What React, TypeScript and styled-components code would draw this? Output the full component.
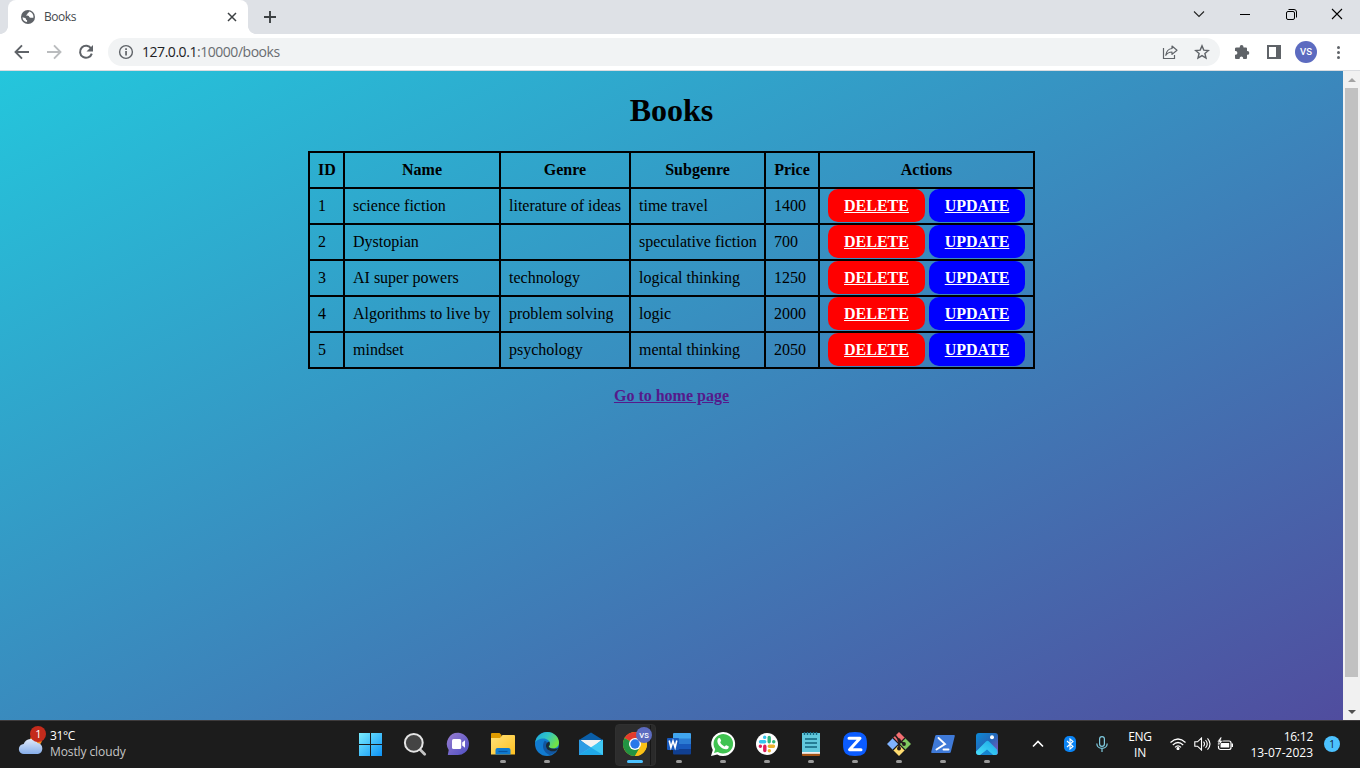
import React from "react";
import styled, { createGlobalStyle, css } from "styled-components";

const GlobalStyle = createGlobalStyle`
  html, body { margin: 0; padding: 0; overflow: hidden; }
  * { box-sizing: border-box; }
  svg { display: block; flex: none; }
`;

const ui = `"Open Sans", "Noto Sans", sans-serif`;

const Screen = styled.div`
  width: 1360px;
  height: 768px;
  display: flex;
  flex-direction: column;
  overflow: hidden;
  font-family: ${ui};
`;

/* Browser chrome */
const TabStrip = styled.div`
  height: 34px;
  background: #dee1e6;
  display: flex;
  justify-content: space-between;
  padding-left: 8px;
`;
const TabGroup = styled.div`
  display: flex;
`;
const Tab = styled.div`
  position: relative;
  width: 240px;
  height: 34px;
  background: #fff;
  border-radius: 8px 8px 0 0;
  display: flex;
  align-items: center;
  padding: 0 9px 0 13px;
  &::before, &::after {
    content: "";
    position: absolute;
    bottom: 0;
    width: 8px;
    height: 8px;
  }
  &::before {
    left: -8px;
    background: radial-gradient(circle at 0 0, transparent 7.6px, #fff 8.2px);
  }
  &::after {
    right: -8px;
    background: radial-gradient(circle at 100% 0, transparent 7.6px, #fff 8.2px);
  }
`;
const TabTitle = styled.span`
  flex: 1;
  margin: -1px 0 0 9px;
  font-size: 12px;
  letter-spacing: -0.45px;
  color: #45494d;
`;
const NewTab = styled.div`
  width: 44px;
  display: flex;
  align-items: center;
  justify-content: center;
`;
const WindowControls = styled.div`
  display: flex;
  height: 28px;
`;
const WindowButton = styled.div`
  width: 46px;
  display: flex;
  align-items: center;
  justify-content: center;
`;
const Toolbar = styled.div`
  height: 37px;
  background: #fff;
  border-bottom: 1px solid #dadce0;
  display: flex;
  align-items: center;
  padding-left: 6px;
`;
const ToolButton = styled.div`
  width: 32px;
  display: flex;
  justify-content: center;
`;
const AddressBar = styled.div`
  width: 1112px;
  height: 28px;
  margin: 0 6px 0 6px;
  border-radius: 14px;
  background: #f1f3f4;
  display: flex;
  align-items: center;
  padding: 0 2px 0 10px;
`;
const Url = styled.span`
  flex: 1;
  margin: -2px 0 0 8px;
  font-size: 14px;
  letter-spacing: -0.46px;
  color: #696d71;
  b { font-weight: 400; color: #202124; }
`;
const Avatar = styled.div`
  width: 22px;
  height: 22px;
  border-radius: 50%;
  background: #5c6bc0;
  color: #fff;
  font: 500 9.5px/22px Roboto, sans-serif;
  text-align: center;
`;

/* Web page */
const Viewport = styled.div`
  height: 649px;
  display: flex;
`;
const Page = styled.main`
  width: 1343px;
  height: 649px;
  overflow: hidden;
  background: linear-gradient(to bottom right, #24c6dc, #514a9d) 0 0 / 1343px 678px no-repeat;
  font: 16px/18px "Liberation Serif", "Times New Roman", serif;
  color: #000;
  display: flex;
  flex-direction: column;
  align-items: center;
`;
const Heading = styled.h1`
  margin: 21px 0 22px;
  font-size: 32px;
  line-height: 37px;
`;
const Table = styled.table`
  width: 727px;
  table-layout: fixed;
  border-collapse: collapse;
`;
const Col = styled.col<{ $w: number }>`
  width: ${(p) => p.$w}px;
`;
const cell = css`
  height: 36px;
  border: 2px solid #000;
  padding: 0 8px;
  white-space: nowrap;
`;
const Th = styled.th`
  ${cell}
  text-align: center;
`;
const Td = styled.td`
  ${cell}
`;
const Actions = styled.div`
  display: flex;
  gap: 4px;
  width: 197px;
  margin-bottom: 1px;
`;
const Action = styled.a<{ $tone: string; $w: number }>`
  width: ${(p) => p.$w}px;
  height: 33px;
  border-radius: 10px;
  background: ${(p) => p.$tone};
  color: #fff;
  font-weight: 700;
  line-height: 34px;
  text-align: center;
  text-decoration: underline;
`;
const HomeLink = styled.a`
  margin-top: 18px;
  font-weight: 700;
  color: #551a8b;
  text-decoration: underline;
`;
const Scrollbar = styled.div`
  width: 17px;
  background: #f1f1f1;
  display: flex;
  flex-direction: column;
  align-items: center;
`;
const ScrollArrow = styled.div`
  height: 17px;
  display: flex;
  align-items: center;
`;
const Thumb = styled.div`
  width: 13px;
  height: 589px;
  margin-bottom: 26px;
  background: #c1c1c1;
`;

/* Taskbar */
const Taskbar = styled.div`
  height: 48px;
  background: #1c1c1c;
  border-top: 1px solid #3e3b3c;
  display: flex;
  color: #fff;
  font-size: 12px;
`;
const Weather = styled.div`
  width: 349px;
  display: flex;
  padding: 5px 0 0 18px;
`;
const WeatherText = styled.div`
  margin: 2px 0 0 4px;
  line-height: 16px;
  letter-spacing: -0.1px;
  span { display: block; }
  span:first-child { letter-spacing: -0.4px; }
  span + span { color: #c6c6c6; }
`;
const AppSlot = styled.div<{ $active?: boolean }>`
  width: 44px;
  height: 47px;
  padding-top: 11px;
  display: flex;
  flex-direction: column;
  align-items: center;
  position: relative;
  ${(p) =>
    p.$active &&
    css`
      &::before {
        content: "";
        position: absolute;
        left: 2px;
        top: 3px;
        width: 39px;
        height: 40px;
        border-radius: 4px;
        background: linear-gradient(90deg, #2d2d2d 34px, #171717 34px, #171717 35px, #2a2a2a 35px);
        border: 1px solid #303030;
      }
    `}
  svg { position: relative; }
`;
const Indicator = styled.i<{ $active?: boolean }>`
  position: relative;
  width: ${(p) => (p.$active ? 16 : 6)}px;
  height: 3px;
  margin-top: 4px;
  border-radius: 2px;
  background: ${(p) => (p.$active ? "#4cc2ff" : "#9a9a9a")};
`;
const Tray = styled.div`
  display: flex;
  align-items: center;
  padding-left: 13px;
`;
const TrayItem = styled.div<{ $w: number }>`
  width: ${(p) => p.$w}px;
  display: flex;
  justify-content: center;
  margin-top: -1px;
`;
const Language = styled.div`
  width: 44px;
  margin-right: 4px;
  line-height: 16px;
  letter-spacing: -0.3px;
  text-align: center;
`;
const Clock = styled.div`
  width: 77px;
  line-height: 16px;
  text-align: right;
  white-space: nowrap;
  span { letter-spacing: -0.25px; }
`;
const Notice = styled.div`
  width: 16px;
  height: 16px;
  margin: -2px 0 0 11px;
  border-radius: 50%;
  background: #4cc2ff;
  color: #123;
  font-size: 10px;
  line-height: 16px;
  text-align: center;
`;

const Line = ({ d, w = 2, c = "#5f6368", s = 16 }: { d: string; w?: number; c?: string; s?: number }) => (
  <svg width={s} height={s} viewBox={`0 0 ${s} ${s}`} fill="none" stroke={c} strokeWidth={w}>
    <path d={d} />
  </svg>
);

const books = [
  ["1", "science fiction", "literature of ideas", "time travel", "1400"],
  ["2", "Dystopian", "", "speculative fiction", "700"],
  ["3", "AI super powers", "technology", "logical thinking", "1250"],
  ["4", "Algorithms to live by", "problem solving", "logic", "2000"],
  ["5", "mindset", "psychology", "mental thinking", "2050"],
];

const Icon = ({ children }: { children: React.ReactNode }) => (
  <svg width="24" height="24" viewBox="0 0 24 24" overflow="visible">{children}</svg>
);

const WindowsIcon = () => (
  <Icon>
    <defs>
      <linearGradient id="win" x1="0" y1="0" x2="24" y2="24" gradientUnits="userSpaceOnUse">
        <stop stopColor="#7df0ff" /><stop offset="1" stopColor="#0a8ff5" />
      </linearGradient>
    </defs>
    <path fill="url(#win)" d="M0 1h11v11H0zM12 1h11v11h-11zM0 13h11v11H0zM12 13h11v11h-11z" />
  </Icon>
);
const SearchIcon = () => (
  <Icon>
    <path d="M17 17.500l4.700 4.700" stroke="#c4c4c4" strokeWidth="2.800" strokeLinecap="round" />
    <circle cx="10.800" cy="10.800" r="8.900" fill="#444" stroke="#e4e4e4" strokeWidth="2" />
  </Icon>
);
const ChatIcon = () => (
  <Icon>
    <defs>
      <linearGradient id="chat" x1="0" y1="0" x2="1" y2="1">
        <stop stopColor="#9a7ed0" /><stop offset="1" stopColor="#4e4fc4" />
      </linearGradient>
    </defs>
    <path fill="url(#chat)" d="M11.800.8a11.100 11.100 0 1 1-2 22.200H.8l.9-5A11.100 11.100 0 0 1 11.800.8z" />
    <rect x="5" y="7" width="9.200" height="10" rx="1.600" fill="#fff" />
    <path d="M15.200 10.500l2.800-2.200v7.400l-2.800-2.200z" fill="#fff" />
  </Icon>
);
const FolderIcon = () => (
  <Icon>
    <defs>
      <linearGradient id="fold" x1="0" y1="0" x2="1" y2="1">
        <stop stopColor="#ffe27a" /><stop offset="1" stopColor="#ffc020" />
      </linearGradient>
    </defs>
    <path d="M0 2q0-1 1-1h7.500l2 2V8H0z" fill="#df9b00" />
    <path d="M0 6h9L11.500 3H23q1 0 1 1v18.500H0z" fill="url(#fold)" />
    <path d="M4.500 22.500V18q0-2 2-2h11q2 0 2 2v4.500z" fill="#0f7bd0" />
    <path d="M7.500 19.500h9" stroke="#0754a0" strokeWidth="1.200" />
  </Icon>
);
const EdgeIcon = () => (
  <Icon>
    <defs>
      <linearGradient id="eg" x1="0" y1="0" x2="1" y2=".5">
        <stop stopColor="#1aa5df" /><stop offset=".5" stopColor="#2fc3c6" /><stop offset="1" stopColor="#72e245" />
      </linearGradient>
    </defs>
    <circle cx="12" cy="12" r="12" fill="#117bd0" />
    <path fill="url(#eg)" d="M.2 10.500C1 4.500 6 0 12.300 0 19 0 24 5 24 10.600c0 3.500-2.700 5.900-6 5.900-2.600 0-4.300-1-4.300-1.800 0-.7 1.200-1.200 1.200-3.100C14.900 9 12 6.500 8.500 6.500 4.500 6.500 1.300 8.500.2 10.500z" />
    <path fill="#1256a0" d="M9.600 8.800c-3.500 5.500-1 11.800 4.900 14.100 3.400-.7 6.200-2.500 7.800-5-4.400 2.400-10.700 1.200-11.300-3.500-.2-1.700.3-2.900 1-3.900-.5-1-1.300-1.600-2.400-1.700z" />
    <path fill="#1c1c1c" d="M13.700 14.700c.4-1 1.200-1.200 1.200-3.100 0-.7-.2-1.400-.6-2-2.500.6-3.600 2.600-3.300 4.800.5 4.600 7.500 6.200 11.300 3.500.4-.7.800-1.400 1-2.100-2.500 1.500-8.300 1-9.600-1.100z" opacity=".85" />
  </Icon>
);
const MailIcon = () => (
  <Icon>
    <path d="M0 8L12 .5 24 8v9H0z" fill="#0a5ea8" />
    <path d="M1.500 8h21L12 17z" fill="#f2f2f2" />
    <path d="M0 7.500l13 8.500L24 23H0z" fill="#2c9be4" />
    <path d="M24 7.500L0 23h24z" fill="#3fc8f4" />
    <path d="M0 23l12-7.500L24 23z" fill="#20a8e8" />
  </Icon>
);
const ChromeIcon = () => (
  <Icon>
    <circle cx="12" cy="12" r="12" fill="#fbc116" />
    <path d="M12 12L1.600 6A12 12 0 0 1 22.400 6z" fill="#e33b2e" />
    <path d="M12 12l-10.400-6A12 12 0 0 0 12 24l5.200-9z" fill="#229342" />
    <path d="M12 6h10.400A12 12 0 0 1 12 24l5.200-9z" fill="#fbc116" />
    <circle cx="12" cy="12" r="6" fill="#fff" />
    <circle cx="12" cy="12" r="4.700" fill="#2777ea" />
    <circle cx="21" cy="3" r="8" fill="#5c6bc0" />
    <text x="21" y="5.700" fontFamily="Roboto" fontSize="7.500" fontWeight="500" fill="#fff" textAnchor="middle">VS</text>
  </Icon>
);
const WordIcon = () => (
  <Icon>
    <path d="M6 2q0-1 1-1h16q1 0 1 1v5H6z" fill="#41a5ee" /><path d="M6 6.500h18V12H6z" fill="#2b7cd3" />
    <path d="M6 12h18v5.500H6z" fill="#185abd" /><path d="M6 17h18v4.500q0 1-1 1H7q-1 0-1-1z" fill="#103f91" />
    <rect y="6" width="12" height="12" rx="1" fill="#185abd" />
    <path d="M2.200 8.500l1.700 7 2.100-6.500 2.100 6.500 1.700-7" fill="none" stroke="#fff" strokeWidth="1.600" />
  </Icon>
);
const WhatsAppIcon = () => (
  <Icon>
    <path d="M0 24l1.800-6A12 12 0 1 1 6.200 22.400z" fill="#fff" />
    <path d="M3 21l1.200-3.700A9.800 9.800 0 1 1 6.800 19.900z" fill="#40c351" />
    <path d="M7.500 6.200c.4-.4 1.400-.4 1.700.3l.9 2.100c.2.600-1 1.500-.8 2 .9 1.800 2.200 3 4.100 3.800.6.200 1.300-1.400 1.900-1.200l2.200 1.100c.8.400-.1 2.300-1 2.700-2.200 1.100-5.600-.6-7.600-2.700C6.800 12 5.200 8.600 7.500 6.200z" fill="#fff" />
  </Icon>
);
const SlackIcon = () => (
  <Icon>
    <circle cx="12" cy="12" r="11" fill="#fff" />
    <g strokeWidth="3.400" strokeLinecap="round" fill="none">
      <path d="M5.500 9.800h4.200M9.700 5.300v.1" stroke="#36c5f0" /><path d="M14.200 5.500v4.200M18.700 9.700h.1" stroke="#2eb67d" />
      <path d="M14.300 14.200h4.200M14.300 18.700v.1" stroke="#ecb22e" /><path d="M9.800 14.300v4.200M5.300 14.200h.1" stroke="#e01e5a" />
    </g>
  </Icon>
);
const NotepadIcon = () => (
  <Icon>
    <rect x="3" y="20" width="18" height="4" rx="1" fill="#a55314" />
    <path d="M3 1h18v20H3z" fill="#61c8dc" /><path d="M3 20h18v1.800H3z" fill="#f0f0f0" />
    <path d="M5.500 0v3M8.500 0v3M11.500 0v3M14.500 0v3M17.500 0v3" stroke="#146a86" strokeWidth="1.400" />
    <path d="M6 7h12M6 11h12M6 15h12" stroke="#12647e" strokeWidth="1.700" />
  </Icon>
);
const ZIcon = () => (
  <Icon>
    <path d="M12 0c9 0 12 3 12 12s-3 12-12 12S0 21 0 12 3 0 12 0z" fill="#0b5cff" />
    <path d="M6 6.300h11L6.500 17.700H18" fill="none" stroke="#fff" strokeWidth="3" strokeLinejoin="round" strokeLinecap="round" />
  </Icon>
);
const GitIcon = () => (
  <Icon>
    <path d="M12 0l6 6-6 6-6-6z" fill="#f46f72" /><path d="M18 6l6 6-6 6-6-6z" fill="#80c860" />
    <path d="M6 6l6 6-6 6-6-6z" fill="#80b3ff" /><path d="M12 12l6 6-6 6-6-6z" fill="#ffdc70" />
    <path d="M6 6l12 12M18 6L6 18" stroke="#1c1c1c" strokeWidth="1.200" />
    <path d="M8 3l4 5v8M12 8l5 4" stroke="#241c1c" strokeWidth="1.700" fill="none" />
    <circle cx="12" cy="8" r="1.700" fill="#241c1c" /><circle cx="12" cy="16.500" r="2" fill="#241c1c" /><circle cx="17" cy="12" r="1.900" fill="#241c1c" />
  </Icon>
);
const ShellIcon = () => (
  <Icon>
    <path d="M5.500 3H23q1 0 .8 1l-4 16q-.2 1-1.300 1H1q-1 0-.8-1l4-16q.3-1 1.300-1z" fill="#3f7ad8" />
    <path d="M7.500 6l6.500 6-8.500 5.500M12.500 17.500h5" stroke="#fff" strokeWidth="1.900" fill="none" strokeLinecap="round" />
  </Icon>
);
const PhotosIcon = () => (
  <Icon>
    <defs>
      <linearGradient id="pa" x1="0" y1="0" x2="1" y2="1">
        <stop stopColor="#0b8bd8" /><stop offset=".5" stopColor="#2467b8" /><stop offset="1" stopColor="#8b58bd" />
      </linearGradient>
      <linearGradient id="pb" x1="0" y1="1" x2="1" y2="0">
        <stop stopColor="#4ae0fa" /><stop offset="1" stopColor="#18a5e6" />
      </linearGradient>
      <clipPath id="pc"><rect x="1" y="1" width="22" height="22" rx="3" /></clipPath>
    </defs>
    <g clipPath="url(#pc)">
      <path d="M1 1h22v22H1z" fill="url(#pa)" />
      <path d="M1 19.500L11 9.500q1.500-1.300 3 0L22 17.500 23 23H18l-6-5-7 5H1z" fill="url(#pb)" />
      <path d="M12 17.500l7 6.500H5z" fill="#1485cf" />
    </g>
    <circle cx="17" cy="5.200" r="2" fill="#fff" />
  </Icon>
);

const apps: { icon: React.FC; open?: boolean; active?: boolean }[] = [
  { icon: WindowsIcon }, { icon: SearchIcon }, { icon: ChatIcon },
  { icon: FolderIcon, open: true }, { icon: EdgeIcon, open: true }, { icon: MailIcon },
  { icon: ChromeIcon, open: true, active: true }, { icon: WordIcon, open: true },
  { icon: WhatsAppIcon, open: true }, { icon: SlackIcon, open: true },
  { icon: NotepadIcon, open: true }, { icon: ZIcon, open: true }, { icon: GitIcon, open: true },
  { icon: ShellIcon, open: true }, { icon: PhotosIcon, open: true },
];

export default function App() {
  return (
    <Screen>
      <GlobalStyle />
      <TabStrip>
        <TabGroup>
          <Tab>
            <svg width="14" height="14" viewBox="0 0 14 14">
              <circle cx="7" cy="7" r="7" fill="#5f6368" />
              <path d="M8.200 1.500c-.2 1.400-1.600 1-1.700 2.200-.1 1-1.400.9-1.500 1.900 1.500.2 2.900 0 3.300 1.400.4.900 1.300.6 2.200.7.600.200 1.200-.2 1.900.1A5.500 5.500 0 0 0 8.200 1.500zM1.500 7.200c.9.600 2.500.5 3.300 1.300.5.600-.1 1.300.8 1.600.8.200.5 1.200.4 2A5.300 5.300 0 0 1 1.500 7.200z" fill="#fff" />
            </svg>
            <TabTitle>Books</TabTitle>
            <Line s={14} d="M3 3l8 8M11 3l-8 8" w={1.5} c="#3c4043" />
          </Tab>
          <NewTab><Line d="M8 2v12M2 8h12" w={1.9} c="#3c4043" /></NewTab>
        </TabGroup>
        <WindowControls>
          <WindowButton><Line s={12} d="M1 3.500l5 5 5-5" w={1.1} c="#222" /></WindowButton>
          <WindowButton><Line s={10} d="M0 5.500h10" w={1} c="#000" /></WindowButton>
          <WindowButton>
            <svg width="11" height="11" viewBox="0 0 11 11" fill="none" stroke="#000">
              <rect x=".5" y="2.500" width="8" height="8" rx="1.500" /><path d="M2.500.5H8Q10.500.5 10.500 3v5.500" />
            </svg>
          </WindowButton>
          <WindowButton><Line s={12} d="M1 1l10 10M11 1L1 11" w={1.1} c="#000" /></WindowButton>
        </WindowControls>
      </TabStrip>
      <Toolbar>
        <ToolButton><Line d="M15 8H2M8 1.300L1.500 8 8 14.700" w={1.9} /></ToolButton>
        <ToolButton><Line d="M1 8h13M8 1.300L14.500 8 8 14.700" w={1.9} c="#babcbe" /></ToolButton>
        <ToolButton>
          <svg width="16" height="16" viewBox="0 0 16 16">
            <path d="M13.200 4.700A6 6 0 1 0 13.800 9.600" fill="none" stroke="#5f6368" strokeWidth="2" />
            <path d="M15 1v6.500H8.500z" fill="#5f6368" />
          </svg>
        </ToolButton>
        <AddressBar>
          <svg width="16" height="16" viewBox="0 0 16 16">
            <circle cx="8" cy="8" r="6.400" fill="none" stroke="#5f6368" strokeWidth="1.400" />
            <path d="M7.200 7h1.700v4.500H7.200zM7.200 4.300h1.700V6H7.200z" fill="#5f6368" />
          </svg>
          <Url><b>127.0.0.1</b>:10000/books</Url>
          <ToolButton>
            <svg width="16" height="16" viewBox="0 0 16 16" fill="none" stroke="#5f6368" strokeWidth="1.200">
              <path d="M1.500 4v10.500h11V11" />
              <path d="M10 2l5 4.200-5 4.200V8C7 8 5.200 9 3.800 11.300 4.300 7.300 6.600 4.900 10 4.500z" strokeLinejoin="round" />
            </svg>
          </ToolButton>
          <ToolButton>
            <svg width="16" height="16" viewBox="0 0 16 16" fill="none" stroke="#5f6368" strokeWidth="1.400">
              <path d="M8 1.900l1.800 4.200 4.600.4-3.500 3 1.100 4.500L8 11.600 4 14l1.100-4.500-3.500-3 4.600-.4z" />
            </svg>
          </ToolButton>
        </AddressBar>
        <ToolButton>
          <svg width="16" height="16" viewBox="0 0 16 16">
            <path d="M2.500 3.500h3.200V3a1.900 1.900 0 0 1 3.800 0v.5h2.500q1 0 1 1V7h.4a1.900 1.900 0 0 1 0 3.800H13v3q0 1.200-1 1.200H9.200v-.6a1.800 1.800 0 0 0-3.600 0v.6H2q-1 0-1-1v-3.300h.6a1.800 1.800 0 0 0 0-3.600H1V4.500q0-1 1.500-1z" fill="#5f6368" />
          </svg>
        </ToolButton>
        <ToolButton>
          <svg width="14" height="14" viewBox="0 0 14 14">
            <path d="M0 0h14v14H0zM2 2v10h7V2z" fill="#5f6368" fillRule="evenodd" />
          </svg>
        </ToolButton>
        <ToolButton><Avatar>VS</Avatar></ToolButton>
        <ToolButton>
          <svg width="4" height="14" viewBox="0 0 4 14" fill="#5f6368">
            <circle cx="2.500" cy="2.500" r="1.500" /><circle cx="2.500" cy="7.500" r="1.500" /><circle cx="2.500" cy="12.500" r="1.500" />
          </svg>
        </ToolButton>
      </Toolbar>
      <Viewport>
        <Page>
          <Heading>Books</Heading>
          <Table>
            <colgroup>
              {[35, 156, 130, 135, 54, 215].map((w, i) => <Col key={i} $w={w} />)}
            </colgroup>
            <thead>
              <tr>{["ID", "Name", "Genre", "Subgenre", "Price", "Actions"].map((h) => <Th key={h}>{h}</Th>)}</tr>
            </thead>
            <tbody>
              {books.map((row) => (
                <tr key={row[0]}>
                  {row.map((v, i) => <Td key={i}>{v}</Td>)}
                  <Td>
                    <Actions>
                      <Action $tone="#ff0000" $w={97}>DELETE</Action>
                      <Action $tone="#0000ff" $w={96}>UPDATE</Action>
                    </Actions>
                  </Td>
                </tr>
              ))}
            </tbody>
          </Table>
          <HomeLink>Go to home page</HomeLink>
        </Page>
        <Scrollbar>
          <ScrollArrow><svg width="8" height="4"><path d="M0 4l4-4 4 4z" fill="#a3a3a3" /></svg></ScrollArrow>
          <Thumb />
          <ScrollArrow><svg width="8" height="4"><path d="M0 0l4 4 4-4z" fill="#505050" /></svg></ScrollArrow>
        </Scrollbar>
      </Viewport>
      <Taskbar>
        <Weather>
          <svg width="28" height="30" viewBox="0 0 28 30">
            <defs>
              <linearGradient id="cloud" x1="0" y1="0" x2="0" y2="1">
                <stop stopColor="#dfe9fa" /><stop offset="1" stopColor="#86aeea" />
              </linearGradient>
            </defs>
            <circle cx="18" cy="14" r="6" fill="#f08a1d" />
            <path d="M6 28a5 5 0 0 1-.3-10A7.500 7.500 0 0 1 19.500 17 5.600 5.600 0 0 1 20 28z" fill="url(#cloud)" />
            <circle cx="20" cy="8" r="8" fill="#c42b1c" />
            <text x="20.500" y="12" fontFamily="Open Sans" fontSize="11" fill="#fff" textAnchor="middle">1</text>
          </svg>
          <WeatherText><span>31°C</span><span>Mostly cloudy</span></WeatherText>
        </Weather>
        {apps.map(({ icon: Glyph, open, active }, i) => (
          <AppSlot key={i} $active={active}>
            <Glyph />
            {open && <Indicator $active={active} />}
          </AppSlot>
        ))}
        <Tray>
          <TrayItem $w={32}><Line s={12} d="M1 8.500l5-5 5 5" w={1.600} c="#fff" /></TrayItem>
          <TrayItem $w={32}>
            <svg width="12" height="16" viewBox="0 0 12 16">
              <rect width="12" height="16" rx="5" fill="#0a84f5" />
              <path d="M3 5l6 5.500L6 13V3l3 2.500L3 11" fill="none" stroke="#fff" strokeWidth="1.100" />
            </svg>
          </TrayItem>
          <TrayItem $w={32}>
            <svg width="12" height="16" viewBox="0 0 12 16" fill="none" stroke="#7fcbe0" strokeWidth="1.200">
              <rect x="3.600" y=".7" width="4.800" height="9.600" rx="2.400" /><path d="M.8 7.500c0 6.500 10.400 6.500 10.400 0M6 12.500V16" />
            </svg>
          </TrayItem>
          <Language>ENG<br />IN</Language>
          <TrayItem $w={24}>
            <svg width="16" height="12" viewBox="0 0 16 12" fill="none" stroke="#fff" strokeWidth="1.200">
              <path d="M.5 4.500q7.500-7 15 0M2.800 7q5.200-5 10.400 0M5 9.300q3-3 6 0" /><circle cx="8" cy="10.500" r="1" fill="#fff" />
            </svg>
          </TrayItem>
          <TrayItem $w={24}>
            <svg width="17" height="14" viewBox="0 0 17 14" fill="none" stroke="#fff" strokeWidth="1.100">
              <path d="M.8 4.800h2.700L7.500 1v12L3.500 9.200H.8zM9.500 4.700q2 2.300 0 4.600M11.500 3q3.500 4 0 8M13.500 1.300q5 5.700 0 11.400" />
            </svg>
          </TrayItem>
          <TrayItem $w={22}>
            <svg width="17" height="14" viewBox="0 0 17 14">
              <rect x="1.500" y="4" width="12.500" height="8.500" rx="2" fill="none" stroke="#fff" strokeWidth="1.200" />
              <path d="M3.500 6h8.700v4.500H3.500zM14.500 6.500H16V10h-1.500z" fill="#fff" />
              <path d="M3.500 0L0 5h2.300L1.500 9 6 3.500H3.800L5 0z" fill="#fff" stroke="#1c1c1c" strokeWidth=".6" />
            </svg>
          </TrayItem>
          <Clock><span>16:12</span><br />13-07-2023</Clock>
          <Notice>1</Notice>
        </Tray>
      </Taskbar>
    </Screen>
  );
}
